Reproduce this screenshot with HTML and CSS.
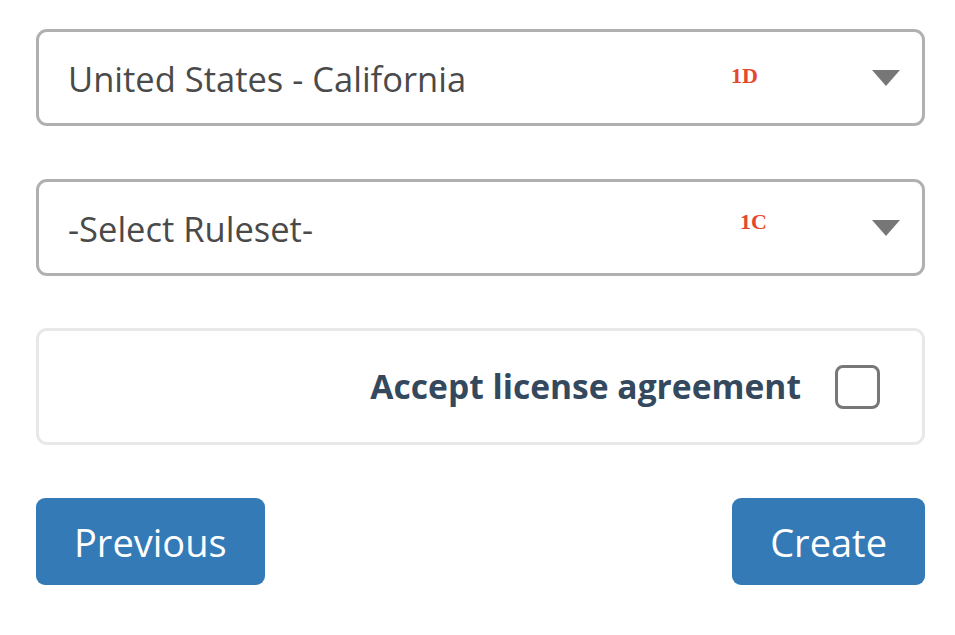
FILE: index.html
```html
<!DOCTYPE html>
<html lang="en">
<head>
  <meta charset="UTF-8">
  <title>Create Project</title>
  <link rel="stylesheet" href="styles.css">
</head>
<body>
  <div class="form">
    <div class="select">
      <span class="select-value">United States - California</span>
      <span class="tag tag-d">1D</span>
      <span class="caret"></span>
    </div>
    <div class="select">
      <span class="select-value">-Select Ruleset-</span>
      <span class="tag tag-c">1C</span>
      <span class="caret"></span>
    </div>
    <div class="license">
      <span class="license-label">Accept license agreement</span>
      <span class="checkbox"></span>
    </div>
    <div class="actions">
      <button class="btn">Previous</button>
      <button class="btn">Create</button>
    </div>
  </div>
</body>
</html>
```

FILE: styles.css
```css
body {
  margin: 0;
  font-family: "Open Sans", Arial, sans-serif;
  background: #fff;
}
.form {
  width: 889px;
  margin-left: 36px;
  padding-top: 29px;
  display: flex;
  flex-direction: column;
}
.select {
  box-sizing: border-box;
  height: 97px;
  border: 3px solid #b0b0b0;
  border-radius: 11px;
  display: flex;
  align-items: center;
  padding: 0 22px 0 29px;
  margin-bottom: 53px;
  position: relative;
}
.select-value {
  flex: 1;
  font-size: 34.5px;
  color: #4a4a4a;
  margin-top: 2px;
}
.tag {
  position: absolute;
  font-family: "Liberation Serif", serif;
  font-weight: bold;
  font-size: 22px;
  color: #e2492f;
}
.tag-d {
  left: 692px;
  top: 31px;
}
.tag-c {
  left: 701px;
  top: 27px;
}
.caret {
  width: 0;
  height: 0;
  border-left: 14px solid transparent;
  border-right: 14px solid transparent;
  border-top: 16px solid #777;
}
.license {
  box-sizing: border-box;
  height: 117px;
  margin-top: -1px;
  border: 3px solid #e8e8e8;
  border-radius: 11px;
  display: flex;
  align-items: center;
  justify-content: flex-end;
  padding-right: 42px;
  gap: 34px;
}
.license-label {
  font-size: 33.6px;
  font-weight: bold;
  color: #34495e;
  margin-top: -2px;
}
.checkbox {
  box-sizing: border-box;
  width: 45px;
  height: 44px;
  border: 3px solid #777;
  border-radius: 8px;
}
.actions {
  display: flex;
  justify-content: space-between;
  margin-top: 53px;
}
.btn {
  height: 87px;
  padding: 0 38px;
  border: none;
  border-radius: 9px;
  background: #337ab7;
  color: #fff;
  font-family: "Open Sans", Arial, sans-serif;
  font-size: 38px;
}
```
